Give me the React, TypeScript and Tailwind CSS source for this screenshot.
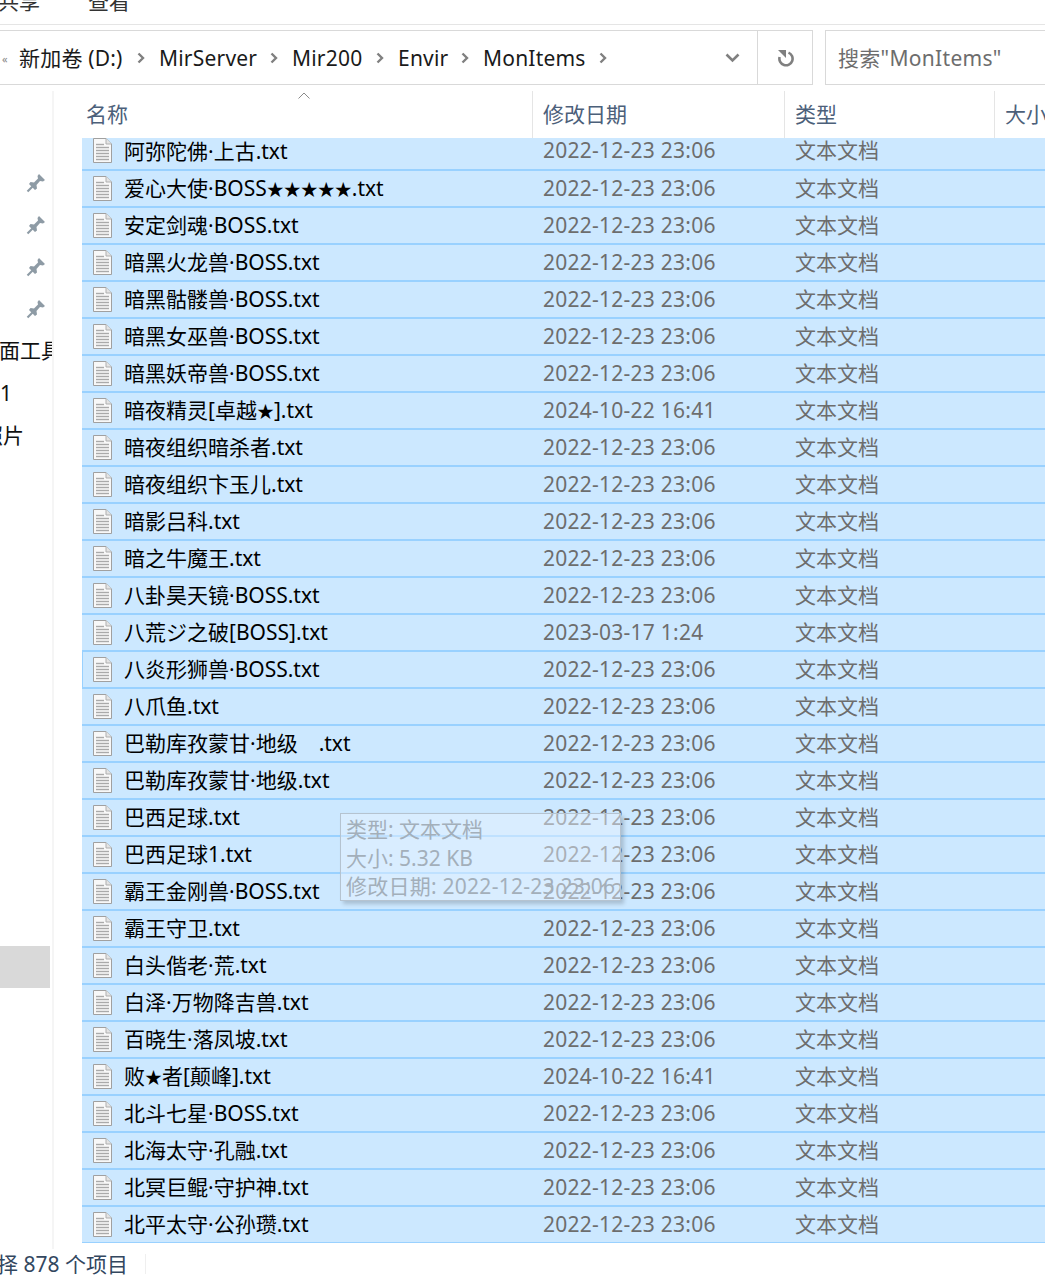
type FileRow = { name: string; date: string };

const d = '2022-12-23 23:06';

const files: FileRow[] = [
  { name: '阿弥陀佛·上古.txt', date: d },
  { name: '爱心大使·BOSS★★★★★.txt', date: d },
  { name: '安定剑魂·BOSS.txt', date: d },
  { name: '暗黑火龙兽·BOSS.txt', date: d },
  { name: '暗黑骷髅兽·BOSS.txt', date: d },
  { name: '暗黑女巫兽·BOSS.txt', date: d },
  { name: '暗黑妖帝兽·BOSS.txt', date: d },
  { name: '暗夜精灵[卓越★].txt', date: '2024-10-22 16:41' },
  { name: '暗夜组织暗杀者.txt', date: d },
  { name: '暗夜组织卞玉儿.txt', date: d },
  { name: '暗影吕科.txt', date: d },
  { name: '暗之牛魔王.txt', date: d },
  { name: '八卦昊天镜·BOSS.txt', date: d },
  { name: '八荒ジ之破[BOSS].txt', date: '2023-03-17 1:24' },
  { name: '八炎形狮兽·BOSS.txt', date: d },
  { name: '八爪鱼.txt', date: d },
  { name: '巴勒库孜蒙甘·地级　.txt', date: d },
  { name: '巴勒库孜蒙甘·地级.txt', date: d },
  { name: '巴西足球.txt', date: d },
  { name: '巴西足球1.txt', date: d },
  { name: '霸王金刚兽·BOSS.txt', date: d },
  { name: '霸王守卫.txt', date: d },
  { name: '白头偕老·荒.txt', date: d },
  { name: '白泽·万物降吉兽.txt', date: d },
  { name: '百晓生·落凤坡.txt', date: d },
  { name: '败★者[颠峰].txt', date: '2024-10-22 16:41' },
  { name: '北斗七星·BOSS.txt', date: d },
  { name: '北海太守·孔融.txt', date: d },
  { name: '北冥巨鲲·守护神.txt', date: d },
  { name: '北平太守·公孙瓒.txt', date: d },
];

function FileIcon() {
  return (
    <svg width="19" height="25" viewBox="0 0 19 25" className="shrink-0">
      <path d="M0.5 0.5H13L18.5 6V24.5H0.5Z" fill="#f8f8f8" stroke="#a0a0a0" />
      <path d="M13 0.5V6H18.5" fill="#e4e4e4" stroke="#b0b0b0" />
      {[6, 9, 12, 15, 18, 21].map((y) => (
        <path key={y} d={`M3 ${y + 0.5}H${y === 6 ? 11 : 16}`} stroke="#aaaaaa" strokeWidth="1.4" />
      ))}
    </svg>
  );
}

function Pin() {
  return (
    <svg width="20" height="20" viewBox="0 0 20 20">
      <path d="M13 1L19 7L17 8.5L14 8L10.5 12L11 15.5L9 17L3 11L4.5 9L8 9.5L12 5.5L11.5 3Z" fill="#8e9ba5" />
      <path d="M6.5 13.5L1.5 18.5" stroke="#8e9ba5" strokeWidth="2.2" fill="none" />
    </svg>
  );
}

function RefreshIcon() {
  return (
    <svg width="17" height="18" viewBox="0 0 17 18" className="ml-[1px]">
      <path d="M11.5 3.6A6.6 6.6 0 1 1 2.6 8" fill="none" stroke="#808080" strokeWidth="2.6" />
      <path d="M1 1H9V9Z" fill="#808080" />
    </svg>
  );
}

function Crumb({ label, className }: { label: string; className: string }) {
  return (
    <>
      <span className={className}>{label}</span>
      <svg width="8" height="12" viewBox="0 0 8 12" className="shrink-0">
        <path d="M1.5 1.5L6 6L1.5 10.5" fill="none" stroke="#808080" strokeWidth="2.4" />
      </svg>
    </>
  );
}

// the stars in the list are narrower than the CJK glyphs around them
function FileName({ name }: { name: string }) {
  return (
    <span className="text-black whitespace-pre">
      {name.split(/(★)/).map((part, i) =>
        part === '★' ? (
          <span key={i} className="text-[17px] leading-none">★</span>
        ) : (
          <span key={i}>{part}</span>
        )
      )}
    </span>
  );
}

function Row({ file, focused, first }: { file: FileRow; focused: boolean; first: boolean }) {
  return (
    <div
      className={`flex items-center h-[37px] bg-[#cce8ff] border-y border-[#99d1ff] ${
        focused ? 'border-l' : ''
      } ${first ? 'border-t-0 -mt-[5px]' : ''}`}
    >
      <div className={`flex items-center ${focused ? 'w-[449px] pl-[10px]' : 'w-[450px] pl-[11px]'} gap-[12px] -mt-[1px]`}>
        <FileIcon />
        <FileName name={file.name} />
      </div>
      <div className="w-[252px] pl-[11px] text-[#6d6d6d] tracking-[0.25px] -mt-[2px]">{file.date}</div>
      <div className="pl-[11px] text-[#6d6d6d] -mt-[2px]">文本文档</div>
    </div>
  );
}

export default function App() {
  return (
    <div className="relative w-[1045px] h-[1283px] overflow-hidden bg-white text-[21px] leading-[28px] font-['Noto_Sans','Noto_Sans_CJK_SC',sans-serif]">
      {/* Ribbon tabs, cut off at the top */}
      <div className="h-[25px] border-b border-[#e5e5e5] flex items-end text-[#333] pb-[13px]">
        <span className="-ml-[2px] leading-[20px] w-[90px] whitespace-nowrap">共享</span>
        <span className="leading-[20px]">查看</span>
      </div>

      {/* Address bar */}
      <div className="flex mt-[5px] h-[55px] gap-[12px]">
        <div className="flex w-[814px] -ml-px border border-[#d9d9d9]">
          <div className="relative flex items-center flex-1 text-[#1a1a1a] gap-[10px] pl-[19px] tracking-[0.2px]">
            <span className="absolute left-[2px] top-[22px] text-[11px] leading-[11px] text-[#888]">«</span>
            <Crumb label="新加卷 (D:)" className="w-[108px] whitespace-nowrap" />
            <Crumb label="MirServer" className="w-[101px] ml-[4px]" />
            <Crumb label="Mir200" className="w-[74px] ml-[4px]" />
            <Crumb label="Envir" className="w-[53px] ml-[4px]" />
            <Crumb label="MonItems" className="w-[106px] ml-[4px]" />
            <div className="flex-1" />
            <svg width="15" height="10" viewBox="0 0 15 10" className="mr-[17px]">
              <path d="M1.5 1.5L7.5 7.5L13.5 1.5" fill="none" stroke="#808080" strokeWidth="2.6" />
            </svg>
          </div>
          <div className="w-[55px] border-l border-[#d9d9d9] flex items-center justify-center">
            <RefreshIcon />
          </div>
        </div>
        <div className="flex-1 border border-r-0 border-[#d9d9d9] flex items-center pl-[12px] text-[#6d6d6d] whitespace-nowrap overflow-hidden tracking-[0.3px]">
          搜索"MonItems"
        </div>
      </div>

      <div className="flex h-[1158px] mt-[6px]">
        {/* Navigation pane, cut off at the left */}
        <div className="w-[54px] border-r-2 border-[#f5f5f5] overflow-hidden pt-[71px] text-[#111]">
          {[0, 1, 2, 3].map((i) => (
            <div key={i} className="h-[42px] flex items-center pl-[26px]">
              <Pin />
            </div>
          ))}
          <div className="h-[42px] flex items-center pb-[3px] -ml-[22px] whitespace-nowrap">桌面工具</div>
          <div className="h-[42px] flex items-center">1</div>
          <div className="h-[42px] flex items-center -ml-[18px] whitespace-nowrap">照片</div>
          <div className="h-[490px]" />
          <div className="h-[42px] w-[50px] bg-[#d9d9d9]" />
        </div>

        {/* File list */}
        <div className="flex-1 ml-[28px] overflow-hidden">
          <div className="relative flex h-[47px] items-center text-[#4c607a]">
            <svg width="12" height="7" viewBox="0 0 12 7" className="absolute left-[216px] top-[1px]">
              <path d="M0.5 6.5L6 1L11.5 6.5" fill="none" stroke="#8a8a8a" />
            </svg>
            <div className="w-[451px] shrink-0 h-full pl-[4px] flex items-center pb-[1px] border-r border-[#e5e5e5]">名称</div>
            <div className="w-[252px] shrink-0 h-full pl-[10px] flex items-center pb-[1px] border-r border-[#e5e5e5]">修改日期</div>
            <div className="w-[210px] shrink-0 h-full pl-[10px] flex items-center pb-[1px] border-r border-[#e5e5e5]">类型</div>
            <div className="shrink-0 pl-[10px] flex items-center pb-[1px] whitespace-nowrap">大小</div>
          </div>
          <div className="overflow-hidden">
            {files.map((file, i) => (
              <Row key={i} file={file} first={i === 0} focused={i === 14} />
            ))}
          </div>
        </div>
      </div>

      {/* Status bar */}
      <div className="flex items-center h-[34px] -mt-[2px] text-[#33475f] whitespace-nowrap">
        <span className="-ml-[24px] pr-[17px] border-r border-[#efefef] leading-[20px]">选择 878 个项目</span>
      </div>

      {/* Fading tooltip over the list */}
      <div className="absolute left-[340px] top-[813px] w-[281px] h-[88px] border border-[#b5c3d0] bg-[#e6f2ff]/50 shadow-[3px_3px_4px_rgba(0,0,0,0.18)] pl-[5px] pt-[1px] text-[#a3afba] leading-[28.5px] whitespace-nowrap">
        <div>类型: 文本文档</div>
        <div>大小: 5.32 KB</div>
        <div className="tracking-[0.25px]">修改日期: 2022-12-23 23:06</div>
      </div>
    </div>
  );
}
